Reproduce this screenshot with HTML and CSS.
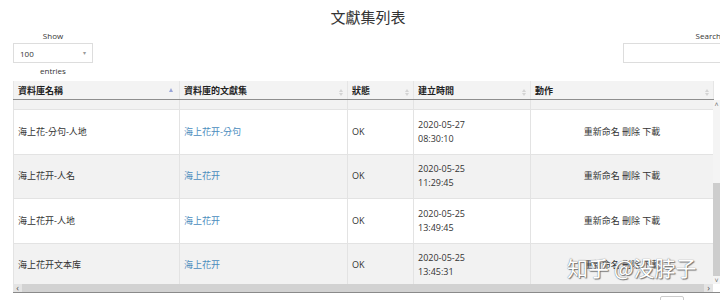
FILE: index.html
```html
<!DOCTYPE html>
<html lang="zh-Hant">
<head>
    <meta charset="UTF-8">
    <meta name="viewport" content="width=device-width, initial-scale=1.0">
    <title>文獻集列表</title>
    <link rel="stylesheet" href="styles.css">
</head>
<body>
<div class="page">
    <h1 class="title">文獻集列表</h1>

    <div class="controls">
        <div class="length">
            <span>Show</span>
            <div class="select"><span>100</span><span class="caret">&#9662;</span></div>
            <span>entries</span>
        </div>
        <div class="search">
            <span>Search:</span>
            <div class="search-input"></div>
        </div>
    </div>

    <div class="table-wrap">
        <table class="dt head">
            <colgroup>
                <col class="c1"><col class="c2"><col class="c3"><col class="c4"><col class="c5">
            </colgroup>
            <tr>
                <th>資料庫名稱<span class="sort-asc"></span></th>
                <th>資料庫的文獻集<span class="sort"></span></th>
                <th>狀態<span class="sort"></span></th>
                <th>建立時間<span class="sort"></span></th>
                <th>動作<span class="sort"></span></th>
            </tr>
        </table>

        <div class="scroll-area">
            <div class="scroll-body">
                <table class="dt rows">
                    <colgroup>
                        <col class="c1"><col class="c2"><col class="c3"><col class="c4"><col class="c5">
                    </colgroup>
                    <tr class="filler"><td></td><td></td><td></td><td></td><td></td></tr>
                    <tr>
                        <td>海上花-分句-人地</td>
                        <td><a href="#">海上花开-分句</a></td>
                        <td>OK</td>
                        <td>2020-05-27<br>08:30:10</td>
                        <td class="actions">重新命名 刪除 下載</td>
                    </tr>
                    <tr>
                        <td>海上花开-人名</td>
                        <td><a href="#">海上花开</a></td>
                        <td>OK</td>
                        <td>2020-05-25<br>11:29:45</td>
                        <td class="actions">重新命名 刪除 下載</td>
                    </tr>
                    <tr>
                        <td>海上花开-人地</td>
                        <td><a href="#">海上花开</a></td>
                        <td>OK</td>
                        <td>2020-05-25<br>13:49:45</td>
                        <td class="actions">重新命名 刪除 下載</td>
                    </tr>
                    <tr>
                        <td>海上花开文本库</td>
                        <td><a href="#">海上花开</a></td>
                        <td>OK</td>
                        <td>2020-05-25<br>13:45:31</td>
                        <td class="actions">重新命名 刪除 下載</td>
                    </tr>
                </table>
                <div class="watermark">知乎 @没脖子</div>
            </div>

            <!-- fake scrollbars -->
            <div class="vbar">
                <div class="arrow">&#708;</div>
                <div class="track"><div class="thumb"></div></div>
                <div class="arrow">&#709;</div>
            </div>
            <div class="hbar">
                <div class="arrow">&lsaquo;</div>
                <div class="hthumb"></div>
                <div class="arrow">&rsaquo;</div>
            </div>
            <div class="corner"></div>
        </div>
    </div>

    <div class="footer"><div class="page-btn"></div></div>
</div>
</body>
</html>
```

FILE: styles.css
```css
body {
    margin: 0;
    background: #fff;
    color: #333;
    font-family: "Open Sans", "Noto Sans CJK TC", sans-serif;
    overflow: hidden;
}
.page {
    width: 736px;
    padding: 0 13px;
    box-sizing: border-box;
}
.title {
    margin: 0;
    padding-top: 7px;
    font-size: 15px;
    line-height: 20px;
    font-weight: normal;
    text-align: center;
    color: #333;
}
.controls {
    display: flex;
    justify-content: space-between;
    margin-top: 3px;
    font-size: 8px;
    line-height: 11px;
}
.length {
    width: 80px;
    display: flex;
    flex-direction: column;
    align-items: center;
    gap: 2px;
}
.select {
    width: 80px;
    height: 20px;
    box-sizing: border-box;
    border: 1px solid #ddd;
    padding: 0 6px;
    display: flex;
    justify-content: space-between;
    align-items: center;
}
.caret {
    color: #999;
    font-size: 6px;
}
.search {
    display: flex;
    flex-direction: column;
    align-items: flex-end;
    gap: 2px;
}
.search-input {
    width: 100px;
    height: 20px;
    box-sizing: border-box;
    border: 1px solid #ddd;
}
.table-wrap {
    margin-top: 5px;
    width: 707px;
}
.dt {
    width: 700px;
    table-layout: fixed;
    border-collapse: collapse;
    font-size: 9px;
}
.c1 { width: 166px; }
.c2 { width: 168px; }
.c3 { width: 66px; }
.c4 { width: 117px; }
.c5 { width: 183px; }
.head th {
    height: 18px;
    padding: 0 4px;
    text-align: left;
    font-weight: bold;
    color: #222;
    background: #f3f3f3;
    border-left: 1px solid #e6e6e6;
    border-right: 1px solid #e6e6e6;
    border-bottom: 1px solid #8e8e8e;
}
.sort,
.sort-asc {
    float: right;
    display: flex;
    flex-direction: column;
    gap: 1px;
    margin-top: 5px;
}
.sort::before,
.sort::after,
.sort-asc::before {
    content: "";
    border-left: 2px solid transparent;
    border-right: 2px solid transparent;
}
.sort::before { border-bottom: 3px solid #d4d4d4; }
.sort::after { border-top: 3px solid #d4d4d4; }
.sort-asc::before { border-bottom: 4px solid #9aa6d8; }
.sort-asc { margin-top: 4px; margin-right: 2px; }
.scroll-area {
    display: grid;
    grid-template-columns: 700px 7px;
    grid-template-rows: 184px 9px;
}
.scroll-body {
    position: relative;
    overflow: hidden;
}
.rows td {
    height: 43.5px;
    padding: 0 4px;
    line-height: 14px;
    border: 1px solid #e3e3e3;
    vertical-align: middle;
}
.rows tr:nth-child(odd) td { background: #f2f2f2; }
.rows tr:nth-child(even) td { background: #fff; }
.rows .filler td {
    height: 9px;
    padding: 0;
    border-top: 0;
}
.rows a {
    color: #4a8cbd;
    text-decoration: none;
}
.actions { text-align: center; }
.watermark {
    position: absolute;
    left: 554px;
    top: 153px;
    font-family: "Noto Sans CJK SC", sans-serif;
    font-size: 21px;
    line-height: 28px;
    color: #fff;
    text-shadow: 0 0 1px #555, 1px 1px 1px #777;
    white-space: nowrap;
}
.vbar {
    display: flex;
    flex-direction: column;
    background: #f4f4f4;
}
.vbar .arrow {
    height: 9px;
    font-size: 7px;
    line-height: 9px;
    text-align: center;
    color: #777;
}
.track {
    flex: 1;
    padding-top: 74px;
}
.thumb {
    height: 93px;
    background: #cdcdcd;
}
.hbar {
    display: flex;
    background: #d2d2d2;
    border-bottom: 1px solid #8a8a8a;
}
.hbar .arrow {
    width: 9px;
    font-size: 9px;
    line-height: 8px;
    text-align: center;
    color: #555;
    background: #e4e4e4;
}
.hthumb { flex: 1; }
.corner {
    background: #fff;
    border-bottom: 1px solid #8a8a8a;
}
.footer {
    display: flex;
    justify-content: flex-end;
    padding-right: 39px;
    margin-top: 3px;
}
.page-btn {
    width: 22px;
    height: 12px;
    border: 1px solid #ccc;
    border-radius: 2px;
}
```
